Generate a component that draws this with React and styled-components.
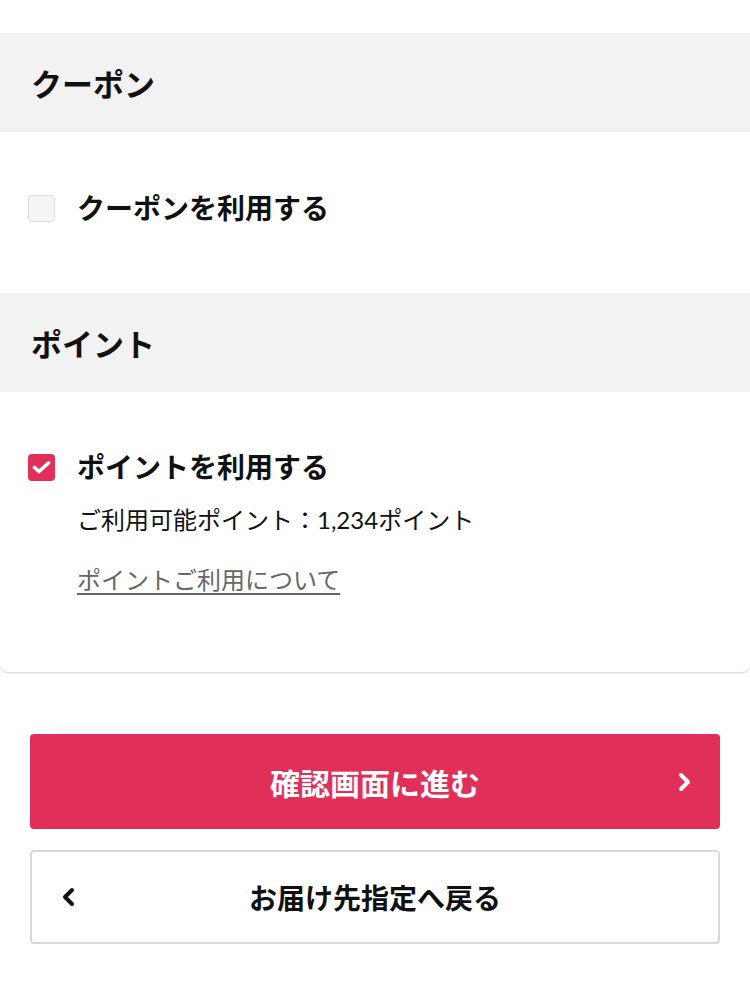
import styled, { createGlobalStyle } from 'styled-components';

const GlobalStyle = createGlobalStyle`
  body {
    margin: 0;
    background: #fff;
    font-family: Lato, "Noto Sans CJK JP", sans-serif;
    color: #111;
  }
`;

const Page = styled.div`
  padding-top: 33px;
  padding-bottom: 58px;
`;

const SectionHeader = styled.h2`
  margin: 0;
  height: 99px;
  display: flex;
  align-items: center;
  padding: 0 31px;
  background: #f2f2f2;
  font-size: 31px;
  font-weight: 700;
  color: #111;
`;

const Card = styled.section`
  padding: ${p => p.$pad};
  background: #fff;
  border-radius: 0 0 8px 8px;
  box-shadow: ${p => (p.$shadow ? '0 1px 2px rgba(0, 0, 0, 0.18)' : 'none')};
`;

const CheckRow = styled.label`
  display: flex;
  align-items: center;
  gap: 22px;
  padding-left: 28px;
  font-size: 28px;
  font-weight: 700;
  line-height: 32px;
`;

const Box = styled.span`
  width: 27px;
  height: 27px;
  box-sizing: border-box;
  border-radius: 4px;
  display: flex;
  align-items: center;
  justify-content: center;
  background: ${p => (p.$checked ? '#e0305a' : '#f5f5f5')};
  border: ${p => (p.$checked ? 'none' : '1px solid #dddddd')};
`;

const Details = styled.div`
  padding-left: 77px;
  padding-top: 21px;
`;

const Available = styled.p`
  margin: 0;
  font-size: 24px;
  line-height: 32px;
`;

const InfoLink = styled.a`
  display: inline-block;
  margin-top: 28px;
  font-size: 24px;
  line-height: 32px;
  color: #666;
  text-decoration: underline;
  text-underline-offset: 4px;
`;

const Actions = styled.div`
  display: flex;
  flex-direction: column;
  gap: 21px;
  padding: 62px 30px 0;
`;

const Button = styled.button`
  position: relative;
  height: ${p => (p.$primary ? '95px' : '94px')};
  border-radius: 4px;
  box-sizing: border-box;
  display: flex;
  align-items: center;
  justify-content: center;
  font-family: inherit;
  font-weight: 700;
  font-size: ${p => (p.$primary ? '30px' : '28px')};
  color: ${p => (p.$primary ? '#fff' : '#111')};
  background: ${p => (p.$primary ? '#e0305a' : '#fff')};
  border: ${p => (p.$primary ? 'none' : '2px solid #d9d9d9')};
  cursor: pointer;
`;

const Chevron = styled.span`
  position: absolute;
  top: 50%;
  transform: translateY(-50%);
  ${p => (p.$side === 'right' ? 'right: 28px;' : 'left: 29px;')}
  display: flex;
`;

const Check = () => (
  <svg width="19" height="15" viewBox="0 0 19 15">
    <polyline points="2.5,7.5 7,11.5 16.5,3" fill="none" stroke="#fff" strokeWidth="3.6" strokeLinecap="round" strokeLinejoin="round" />
  </svg>
);

const Arrow = ({ dir, color }) => (
  <svg width="15" height="21" viewBox="0 0 15 21">
    <polyline
      points={dir === 'right' ? '4,3.5 11,10.5 4,17.5' : '11,3.5 4,10.5 11,17.5'}
      fill="none"
      stroke={color}
      strokeWidth="4"
      strokeLinecap="round"
      strokeLinejoin="round"
    />
  </svg>
);

export default function App() {
  return (
    <Page>
      <GlobalStyle />
      <SectionHeader>クーポン</SectionHeader>
      <Card $pad="60px 0 69px">
        <CheckRow>
          <Box />
          クーポンを利用する
        </CheckRow>
      </Card>
      <SectionHeader>ポイント</SectionHeader>
      <Card $pad="59px 0 76px" $shadow>
        <CheckRow>
          <Box $checked>
            <Check />
          </Box>
          ポイントを利用する
        </CheckRow>
        <Details>
          <Available>ご利用可能ポイント：1,234ポイント</Available>
          <InfoLink href="#">ポイントご利用について</InfoLink>
        </Details>
      </Card>
      <Actions>
        <Button $primary>
          確認画面に進む
          <Chevron $side="right">
            <Arrow dir="right" color="#fff" />
          </Chevron>
        </Button>
        <Button>
          <Chevron $side="left">
            <Arrow dir="left" color="#111" />
          </Chevron>
          お届け先指定へ戻る
        </Button>
      </Actions>
    </Page>
  );
}
